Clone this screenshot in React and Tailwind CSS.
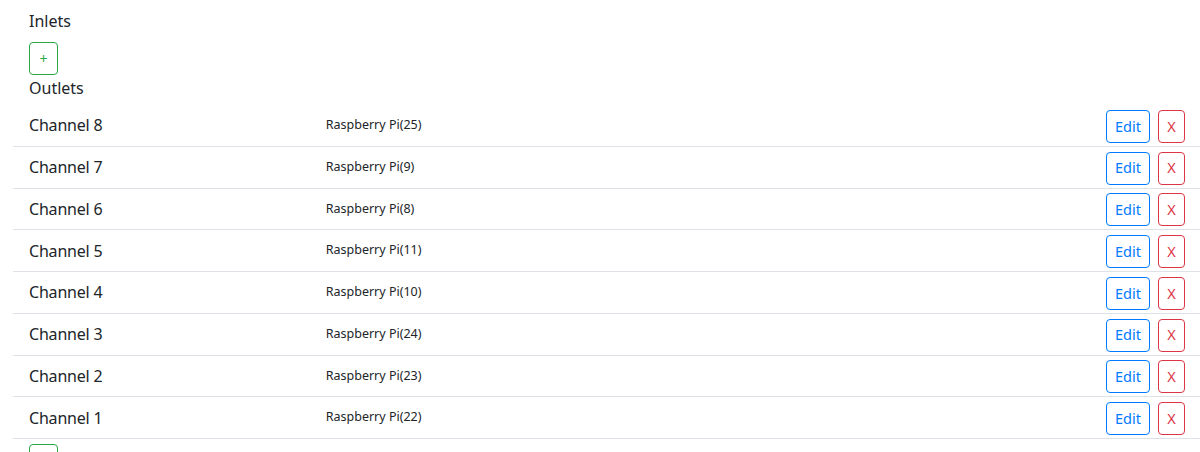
const outlets = [
  { name: "Channel 8", device: "Raspberry Pi(25)" },
  { name: "Channel 7", device: "Raspberry Pi(9)" },
  { name: "Channel 6", device: "Raspberry Pi(8)" },
  { name: "Channel 5", device: "Raspberry Pi(11)" },
  { name: "Channel 4", device: "Raspberry Pi(10)" },
  { name: "Channel 3", device: "Raspberry Pi(24)" },
  { name: "Channel 2", device: "Raspberry Pi(23)" },
  { name: "Channel 1", device: "Raspberry Pi(22)" },
];

function AddButton() {
  return (
    <button className="flex h-[33px] w-[29px] items-center justify-center rounded-[4px] border border-[#28a745] bg-white text-[14px] text-[#28a745]">
      +
    </button>
  );
}

function OutletRow({ name, device }) {
  return (
    <div className="grid h-[41.75px] grid-cols-4 items-center border-b border-[#dee2e6]">
      <div className="px-4 text-[16px] tracking-[-0.2px] text-[#212529]">{name}</div>
      <div className="col-span-2 px-4 text-[12.5px] text-[#212529]">{device}</div>
      <div className="flex items-center justify-end gap-[8px] pr-[15px] pt-[2px]">
        <button className="h-[33px] w-[44px] rounded-[4px] border border-[#007bff] bg-white text-[14.5px] text-[#007bff]">
          Edit
        </button>
        <button className="h-[33px] w-[27px] rounded-[4px] border border-[#dc3545] bg-white text-[14.5px] text-[#dc3545]">
          X
        </button>
      </div>
    </div>
  );
}

export default function App() {
  return (
    <div className="h-[452px] overflow-hidden bg-white pl-[13px] font-['Noto_Sans',sans-serif] text-[#212529]">
      <div className="px-4 pt-[9px]">
        <div className="text-[16px] leading-[24px]">Inlets</div>
        <div className="mt-[9px]">
          <AddButton />
        </div>
        <div className="text-[16px] leading-[26px]">Outlets</div>
      </div>
      <div className="mt-[4px]">
        {outlets.map((o) => (
          <OutletRow key={o.name} {...o} />
        ))}
      </div>
      <div className="px-4 pt-[5px]">
        <AddButton />
      </div>
    </div>
  );
}
